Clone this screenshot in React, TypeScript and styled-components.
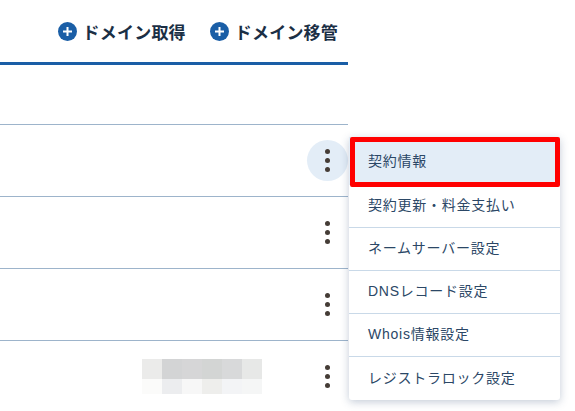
import styled, { createGlobalStyle } from 'styled-components';

const GlobalStyle = createGlobalStyle`
    html, body {
        margin: 0;
        padding: 0;
        background: #fff;
    }
    body {
        font-family: "Liberation Sans", Arial, "Noto Sans CJK JP", sans-serif;
    }
`;
const Page = styled.div`
    position: relative;
    width: 575px;
    height: 411px;
    overflow: hidden;
`;
const Table = styled.div`
    width: 348px;
`;
const Actions = styled.div`
    display: flex;
    justify-content: flex-end;
    align-items: center;
    gap: 24px;
    height: 65px;
    padding-right: 10px;
    box-sizing: border-box;
    border-bottom: 3px solid #1a5ea6;
`;
const Action = styled.a`
    display: flex;
    align-items: center;
    gap: 6px;
    color: #1b2f45;
    font-size: 17px;
    letter-spacing: 0.2px;
    font-weight: 700;
`;
const HeadRow = styled.div`
    height: 59px;
    border-bottom: 1px solid #9db4cb;
`;
const Row = styled.div`
    display: flex;
    justify-content: flex-end;
    align-items: center;
    gap: 45px;
    height: 71px;
    border-bottom: 1px solid #9db4cb;
    &:last-child {
        border-bottom: 0;
    }
`;
const Kebab = styled.button<{ $active?: boolean }>`
    display: flex;
    flex-direction: column;
    align-items: center;
    justify-content: center;
    gap: 4px;
    width: 41px;
    height: 41px;
    padding: 0;
    border: 0;
    border-radius: 50%;
    background: ${(p) => (p.$active ? '#e3edf7' : 'transparent')};
`;
const Dot = styled.span`
    width: 5px;
    height: 5px;
    border-radius: 50%;
    background: #453c36;
`;
const Mosaic = styled.div`
    display: grid;
    grid-template-columns: repeat(6, 20px);
    grid-template-rows: 20px 15px;
`;
const MosaicCell = styled.div<{ $color: string }>`
    background: ${(p) => p.$color};
`;
const Menu = styled.ul`
    position: absolute;
    left: 349px;
    top: 137px;
    width: 211px;
    margin: 0;
    padding: 0;
    list-style: none;
    background: #fff;
    border-radius: 3px;
    box-shadow: 0 2px 8px rgba(40, 70, 110, 0.28);
`;
const MenuItem = styled.li<{ $selected?: boolean }>`
    display: flex;
    align-items: center;
    box-sizing: border-box;
    height: ${(p) => (p.$selected ? '48px' : '43px')};
    padding: 0 0 ${(p) => (p.$selected ? '3px' : '4px')} 19px;
    color: #2b4766;
    font-size: 14px;
    letter-spacing: 0.75px;
    background: ${(p) => (p.$selected ? '#e3edf7' : 'transparent')};
    border-bottom: ${(p) => (p.$selected ? '0' : '1px solid #c9d9e8')};
    &:last-child {
        border-bottom: 0;
    }
`;
const Highlight = styled.div`
    position: absolute;
    left: 350px;
    top: 137px;
    width: 210px;
    height: 50px;
    box-sizing: border-box;
    border: 5px solid #f00;
    border-radius: 2px;
`;

const PlusIcon = () => (
    <svg width="19" height="19" viewBox="0 0 19 19">
        <circle cx="9.5" cy="9.5" r="9.5" fill="#1a5ea6" />
        <path d="M9.5 5v9M5 9.5h9" stroke="#fff" strokeWidth="2" />
    </svg>
);

const mosaic = [
    '#ebebea', '#d3d4d5', '#d6d6d7', '#d3d5d4', '#d8d9da', '#e7e8e7',
    '#fbfbfa', '#ecedef', '#f7f7f7', '#eeeeec', '#f3f4f6', '#f5f6f6',
];

const items = ['契約更新・料金支払い', 'ネームサーバー設定', 'DNSレコード設定', 'Whois情報設定', 'レジストラロック設定'];

const KebabButton = ({ active }: { active?: boolean }) => (
    <Kebab $active={active}>
        <Dot />
        <Dot />
        <Dot />
    </Kebab>
);

export default function App() {
    return (
        <Page>
            <GlobalStyle />
            <Table>
                <Actions>
                    <Action><PlusIcon />ドメイン取得</Action>
                    <Action><PlusIcon />ドメイン移管</Action>
                </Actions>
                <HeadRow />
                <Row><KebabButton active /></Row>
                <Row><KebabButton /></Row>
                <Row><KebabButton /></Row>
                <Row>
                    <Mosaic>
                        {mosaic.map((c, i) => <MosaicCell key={i} $color={c} />)}
                    </Mosaic>
                    <KebabButton />
                </Row>
            </Table>
            <Menu>
                <MenuItem $selected>契約情報</MenuItem>
                {items.map((t) => <MenuItem key={t}>{t}</MenuItem>)}
            </Menu>
            <Highlight />
        </Page>
    );
}
